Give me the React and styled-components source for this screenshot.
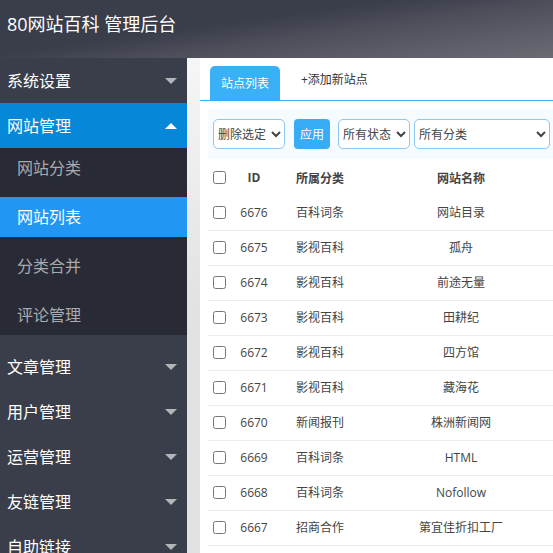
import React from 'react'
import styled, { createGlobalStyle } from 'styled-components'

const GlobalStyle = createGlobalStyle`
  html, body {
    margin: 0;
    height: 100%;
    overflow: hidden;
    background: #fff;
    font-family: "Open Sans", "Noto Sans CJK SC", sans-serif;
  }
  * { box-sizing: border-box; }
`

const Page = styled.div`
  width: 553px;
  height: 553px;
  overflow: hidden;
  display: flex;
  flex-direction: column;
`

const Header = styled.div`
  height: 58px;
  flex-shrink: 0;
  padding: 11px 0 0 7px;
  color: #fff;
  font-size: 18px;
  line-height: 26px;
  background: linear-gradient(172deg, #3a3d4a 40%, #4b4d59 57%, #6a6c74 100%);
`

const Body = styled.div`
  flex: 1;
  display: flex;
  min-height: 0;
`

const Sidebar = styled.div`
  width: 187px;
  flex-shrink: 0;
  background: #3a3d4a;
`

const NavItem = styled.div`
  height: 45px;
  padding: 0 7px 2px;
  display: flex;
  align-items: center;
  justify-content: space-between;
  color: #fff;
  font-size: 16px;
  background: ${p => (p.$open ? '#0688d8' : 'transparent')};
`

const Arrow = styled.span`
  width: 0;
  height: 0;
  margin: 2px 3px 0 0;
  border-left: 6px solid transparent;
  border-right: 6px solid transparent;
  ${p => (p.$up ? 'border-bottom: 6px solid #fff;' : 'border-top: 6px solid #b4b5ba;')}
`

const SubNav = styled.div`
  height: 187px;
  margin-bottom: 9px;
  display: flex;
  flex-direction: column;
  gap: 9px;
  background: #282a35;
`

const SubItem = styled.div`
  height: 40px;
  padding: 0 0 2px 17px;
  display: flex;
  align-items: center;
  font-size: 16px;
  color: ${p => (p.$active ? '#fff' : '#a9aaae')};
  background: ${p => (p.$active ? '#2196f3' : 'transparent')};
`

const Gutter = styled.div`
  width: 13px;
  flex-shrink: 0;
  background: linear-gradient(180deg, #f6f6f6, #e2e2e2 50%);
`

const Main = styled.div`
  flex: 1;
  min-width: 0;
  padding: 8px 0 0 8px;
  background: #fff;
`

const Tabs = styled.div`
  height: 35px;
  margin-left: -8px;
  padding-left: 10px;
  display: flex;
  border-bottom: 1px solid #39aef5;
`

const Tab = styled.div`
  width: ${p => (p.$active ? '70px' : 'auto')};
  height: 34px;
  padding: ${p => (p.$active ? '9px 0 0' : '5px 0 0 21px')};
  text-align: center;
  font-size: 12px;
  line-height: 17px;
  border-radius: 5px 5px 0 0;
  color: ${p => (p.$active ? '#fff' : '#333')};
  background: ${p => (p.$active ? '#3ab0f6' : 'transparent')};
`

const Toolbar = styled.div`
  height: 50px;
  margin-top: 8px;
  padding: 10px 0 0 5px;
  display: flex;
  background: #f5fbff;
`

const Select = styled.select`
  width: ${p => p.$width}px;
  height: 30px;
  flex-shrink: 0;
  margin-right: ${p => p.$gap}px;
  padding: 0;
  font-family: inherit;
  font-size: 12px;
  color: #444;
  background: #fff;
  border: 1px solid #8cc6f4;
  border-radius: 5px;
`

const ApplyButton = styled.button`
  width: 36px;
  height: 30px;
  flex-shrink: 0;
  margin-right: 8px;
  padding: 0;
  border: 0;
  border-radius: 4px;
  font-family: inherit;
  font-size: 12px;
  color: #fff;
  background: #38adf5;
`

const Row = styled.div`
  height: ${p => (p.$head ? '37px' : '35px')};
  padding-bottom: ${p => (p.$head ? '0' : '2px')};
  display: grid;
  grid-template-columns: 23px 46px 128px 112px;
  align-items: center;
  font-size: 12px;
  color: #444;
  font-weight: ${p => (p.$head ? 700 : 400)};
  border-bottom: ${p => (p.$head ? '0' : '1px solid #ececec')};
`

const Check = styled.input.attrs({ type: 'checkbox' })`
  width: 13px;
  height: 13px;
  margin: 0 0 0 5px;
`

const IdCell = styled.div`
  text-align: center;
`

const CategoryCell = styled.div`
  padding-left: 19px;
`

const NameCell = styled.div`
  text-align: center;
`

const menus = ['文章管理', '用户管理', '运营管理', '友链管理', '自助链接']

const subMenus = [
  { label: '网站分类' },
  { label: '网站列表', active: true },
  { label: '分类合并' },
  { label: '评论管理' },
]

const sites = [
  { id: 6676, category: '百科词条', name: '网站目录' },
  { id: 6675, category: '影视百科', name: '孤舟' },
  { id: 6674, category: '影视百科', name: '前途无量' },
  { id: 6673, category: '影视百科', name: '田耕纪' },
  { id: 6672, category: '影视百科', name: '四方馆' },
  { id: 6671, category: '影视百科', name: '藏海花' },
  { id: 6670, category: '新闻报刊', name: '株洲新闻网' },
  { id: 6669, category: '百科词条', name: 'HTML' },
  { id: 6668, category: '百科词条', name: 'Nofollow' },
  { id: 6667, category: '招商合作', name: '第宜佳折扣工厂' },
]

function App() {
  return (
    <Page>
      <GlobalStyle />
      <Header>80网站百科 管理后台</Header>
      <Body>
        <Sidebar>
          <NavItem>系统设置<Arrow /></NavItem>
          <NavItem $open>网站管理<Arrow $up /></NavItem>
          <SubNav>
            {subMenus.map(item => (
              <SubItem key={item.label} $active={item.active}>{item.label}</SubItem>
            ))}
          </SubNav>
          {menus.map(label => (
            <NavItem key={label}>{label}<Arrow /></NavItem>
          ))}
        </Sidebar>
        <Gutter />
        <Main>
          <Tabs>
            <Tab $active>站点列表</Tab>
            <Tab>+添加新站点</Tab>
          </Tabs>
          <Toolbar>
            <Select $width={72} $gap={9}><option>删除选定</option></Select>
            <ApplyButton>应用</ApplyButton>
            <Select $width={72} $gap={4}><option>所有状态</option></Select>
            <Select $width={136} $gap={0}><option>所有分类</option></Select>
          </Toolbar>
          <Row $head>
            <Check />
            <IdCell>ID</IdCell>
            <CategoryCell>所属分类</CategoryCell>
            <NameCell>网站名称</NameCell>
          </Row>
          {sites.map(site => (
            <Row key={site.id}>
              <Check />
              <IdCell>{site.id}</IdCell>
              <CategoryCell>{site.category}</CategoryCell>
              <NameCell>{site.name}</NameCell>
            </Row>
          ))}
        </Main>
      </Body>
    </Page>
  )
}

export default App
